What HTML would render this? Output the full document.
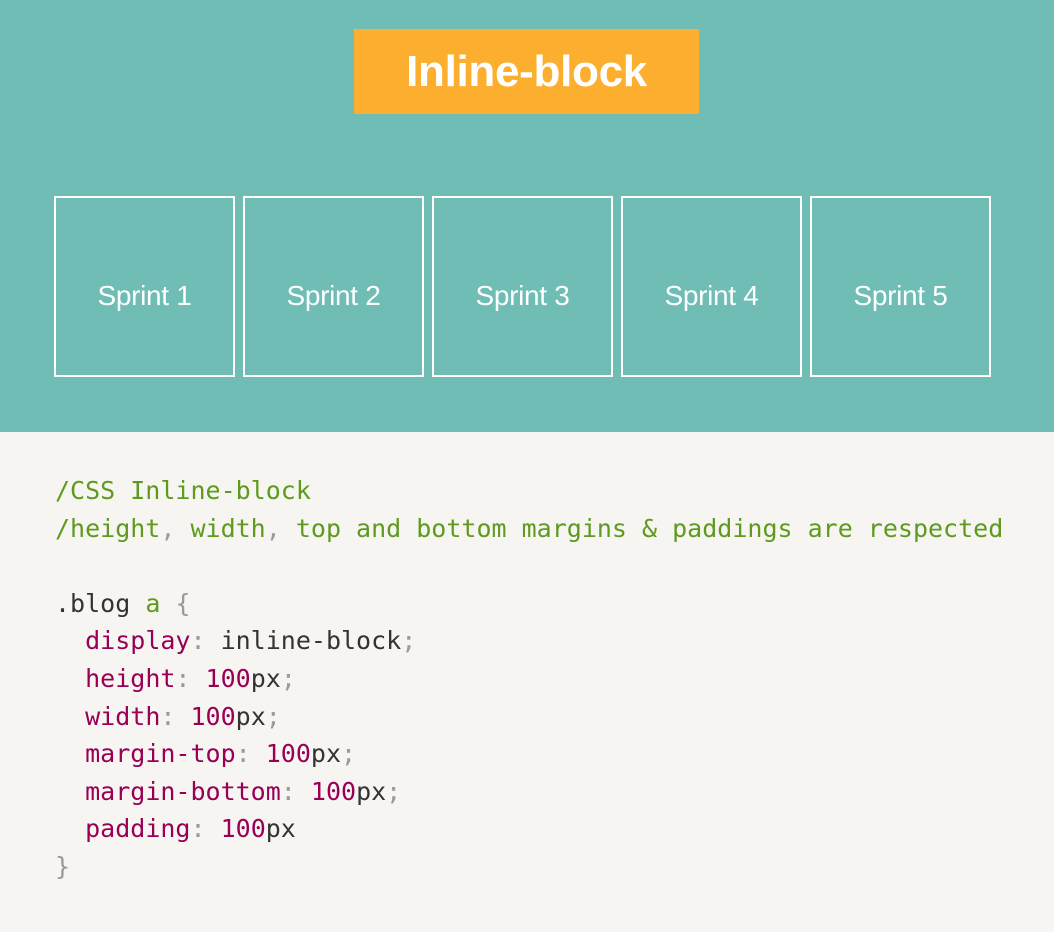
<!DOCTYPE html>
<html><head><style>
html,body{margin:0;padding:0}
body{width:1054px;height:932px;background:#f6f5f1;position:relative;overflow:hidden}
.top{position:absolute;left:0;top:0;width:1054px;height:432px;background:#6fbdb5}
.title{position:absolute;left:354px;top:29px;width:345px;height:85px;background:#fcae2e;color:#fff;font:bold 44px/85px "Liberation Sans",sans-serif;text-align:center;letter-spacing:-0.3px}
.box{position:absolute;top:196px;width:177px;height:177px;border:2px solid #fff;color:#fff;font:28px/195px "Liberation Sans",sans-serif;text-align:center;letter-spacing:-0.3px}
pre{position:absolute;left:55px;top:472px;margin:0;font:25px/37.6px "DejaVu Sans Mono","Liberation Mono",monospace;color:#333}
.c{color:#5f9a1e}.k{color:#990055}.g{color:#999}
</style></head><body>
<div class="top">
<div class="title">Inline-block</div>
<div class="box" style="left:54px">Sprint 1</div>
<div class="box" style="left:243px">Sprint 2</div>
<div class="box" style="left:432px">Sprint 3</div>
<div class="box" style="left:621px">Sprint 4</div>
<div class="box" style="left:810px">Sprint 5</div>
</div>
<pre><span class="c">/CSS Inline-block</span>
<span class="c">/height<span class="g">,</span> width<span class="g">,</span> top and bottom margins &amp; paddings are respected</span>

.blog <span class="c">a</span> <span class="g">{</span>
  <span class="k">display</span><span class="g">:</span> inline-block<span class="g">;</span>
  <span class="k">height</span><span class="g">:</span> <span class="k">100</span>px<span class="g">;</span>
  <span class="k">width</span><span class="g">:</span> <span class="k">100</span>px<span class="g">;</span>
  <span class="k">margin-top</span><span class="g">:</span> <span class="k">100</span>px<span class="g">;</span>
  <span class="k">margin-bottom</span><span class="g">:</span> <span class="k">100</span>px<span class="g">;</span>
  <span class="k">padding</span><span class="g">:</span> <span class="k">100</span>px
<span class="g">}</span></pre>
</body></html>
